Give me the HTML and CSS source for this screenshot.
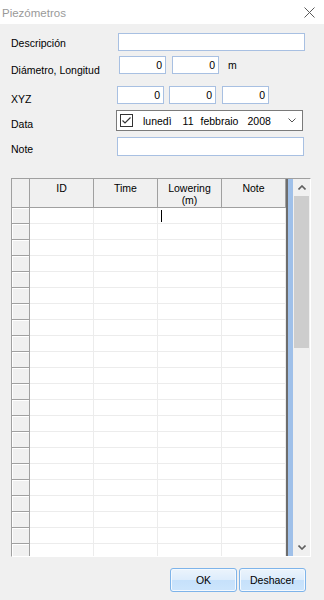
FILE: index.html
```html
<!DOCTYPE html>
<html lang="es">

<head>
  <meta charset="UTF-8" />
  <title>Piezómetros</title>
  <link rel="stylesheet" href="styles.css">
</head>

<body>
  <div class="window">
    <div class="titlebar">
      <span class="title">Piezómetros</span>
      <svg class="close" width="11" height="11" viewBox="0 0 11 11">
        <path d="M0.5 0.5 L10.5 10.5 M10.5 0.5 L0.5 10.5" stroke="#5a5a5a" stroke-width="1" fill="none" />
      </svg>
    </div>

    <div class="form">
      <div class="row row-desc">
        <label>Descripción</label>
        <div class="field wide shift1"></div>
      </div>
      <div class="row row-diam">
        <label>Diámetro, Longitud</label>
        <div class="field num shift2">0</div>
        <div class="field num gap6">0</div>
        <span class="unit">m</span>
      </div>
      <div class="row row-xyz">
        <label>XYZ</label>
        <div class="field num">0</div>
        <div class="field num gap5">0</div>
        <div class="field num gap6">0</div>
      </div>
      <div class="row row-data">
        <label>Data</label>
        <div class="datepicker">
          <svg class="check" width="13" height="13" viewBox="0 0 13 13">
            <rect x="0.5" y="0.5" width="12" height="12" fill="#fff" stroke="#333" />
            <path d="M2.5 6.5 L5 9 L10.5 3.5" stroke="#333" stroke-width="1.2" fill="none" />
          </svg>
          <span class="d-day">lunedì</span>
          <span class="d-num">11</span>
          <span class="d-month">febbraio</span>
          <span class="d-year">2008</span>
          <svg class="chev" width="8" height="5" viewBox="0 0 8 5">
            <path d="M0.5 0.5 L4 4 L7.5 0.5" stroke="#555" stroke-width="1" fill="none" />
          </svg>
        </div>
      </div>
      <div class="row row-note">
        <label>Note</label>
        <div class="field wide note"></div>
      </div>
    </div>

    <div class="grid">
      <div class="table" id="table">
        <div class="corner"></div>
        <div class="head">ID</div>
        <div class="head">Time</div>
        <div class="head">Lowering<br>(m)</div>
        <div class="head">Note</div>
      </div>
      <div class="edge"></div>
      <div class="scrollbar">
        <div class="arrow up">
          <svg width="8" height="5" viewBox="0 0 8 5"><path d="M0.5 4.5 L4 1 L7.5 4.5" stroke="#606060" stroke-width="1.6" fill="none" /></svg>
        </div>
        <div class="thumb"></div>
        <div class="track"></div>
        <div class="arrow down">
          <svg width="8" height="5" viewBox="0 0 8 5"><path d="M0.5 0.5 L4 4 L7.5 0.5" stroke="#606060" stroke-width="1.6" fill="none" /></svg>
        </div>
      </div>
    </div>

    <div class="buttons">
      <button class="btn">OK</button>
      <button class="btn">Deshacer</button>
    </div>
  </div>

  <script>
    const table = document.getElementById("table");
    for (let i = 0; i < 22; i++) {
      let html = '<div class="rowhead"></div>';
      for (let c = 0; c < 4; c++) {
        if (i === 0 && c === 2) {
          html += '<div class="cell"><span class="caret"></span></div>';
        } else {
          html += '<div class="cell"></div>';
        }
      }
      table.insertAdjacentHTML("beforeend", html);
    }
  </script>
</body>

</html>
```

FILE: styles.css
```css
* {
  box-sizing: border-box;
}

body {
  margin: 0;
  background: #f0f0f0;
  font-family: 'Liberation Sans', Arial, sans-serif;
  font-size: 10.5px;
  color: #000;
}

.window {
  width: 324px;
  height: 600px;
  overflow: hidden;
}

.titlebar {
  height: 24px;
  background: #fff;
  display: flex;
  align-items: center;
  justify-content: space-between;
  padding: 0 9px 0 2px;
}

.title {
  color: #999;
  font-size: 11.5px;
  margin-top: 1px;
}

/* form rows */
.form {
  padding-left: 11px;
}

.row {
  display: flex;
  align-items: flex-start;
  height: 18px;
}

.row label {
  width: 106px;
  line-height: 12px;
}

.row-desc {
  margin-top: 9px;
}

.row-desc label {
  margin-top: 4px;
}

.row-diam {
  margin-top: 5px;
}

.row-diam label {
  margin-top: 8px;
}

.row-xyz {
  margin-top: 12px;
}

.row-xyz label {
  margin-top: 7px;
}

.row-data {
  margin-top: 6px;
  height: 21px;
}

.row-data label {
  margin-top: 8px;
}

.row-note {
  margin-top: 6px;
  height: 19px;
}

.row-note label {
  margin-top: 6px;
}

.field {
  height: 18px;
  background: #fff;
  border: 1px solid #a8c0e2;
}

.wide {
  width: 187px;
}

.note {
  height: 19px;
}

.shift1 {
  margin-left: 1px;
}

.shift2 {
  margin-left: 2px;
}

.num {
  width: 47px;
  text-align: right;
  padding-right: 3px;
  line-height: 16px;
}

.gap5 {
  margin-left: 5px;
}

.gap6 {
  margin-left: 6px;
}

.unit {
  margin-left: 9px;
  line-height: 18px;
}

.datepicker {
  width: 187px;
  height: 21px;
  margin-left: -1px;
  background: #fff;
  border: 1px solid #7a7a7a;
  display: flex;
  align-items: center;
  white-space: nowrap;
}

.check {
  margin-left: 3px;
}

.d-day {
  margin-left: 10px;
}

.d-num {
  margin-left: 11px;
}

.d-month {
  margin-left: 7px;
}

.d-year {
  margin-left: 9px;
}

.chev {
  margin-left: auto;
  margin-right: 6px;
}

/* data grid */
.grid {
  margin: 22px 0 0 11px;
  width: 300px;
  height: 379px;
  display: flex;
  border-top: 1px solid #a0a0a0;
  border-left: 1px solid #a0a0a0;
  border-right: 1px solid #fff;
  border-bottom: 1px solid #fff;
}

.table {
  width: 276px;
  height: 377px;
  overflow: hidden;
  display: grid;
  grid-template-columns: 18px 64px 64px 64px 64px;
  grid-auto-rows: 16px;
  grid-template-rows: 29px;
  align-content: start;
  background: #fff;
  border-right: 2px solid #6d6d6d;
}

.corner,
.head {
  background: #f0f0f0;
  border-right: 1px solid #a0a0a0;
  border-bottom: 1px solid #a0a0a0;
}

.head {
  text-align: center;
  line-height: 12px;
  padding-top: 3px;
}

.rowhead {
  background: #f0f0f0;
  border-right: 1px solid #a0a0a0;
  border-bottom: 1px solid #a0a0a0;
  box-shadow: inset 1px 1px 0 #fff;
}

.cell {
  border-right: 1px solid #ececec;
  border-bottom: 1px solid #ececec;
}

.caret {
  display: block;
  width: 1px;
  height: 12px;
  margin: 2px 0 0 3px;
  background: #000;
}

.edge {
  width: 5px;
  background: #9fc0e9;
}

.scrollbar {
  width: 17px;
  display: flex;
  flex-direction: column;
  background: #f0f0f0;
}

.arrow {
  height: 17px;
  display: flex;
  align-items: center;
  justify-content: center;
}

.thumb {
  height: 152px;
  margin: 0 1px;
  background: #cdcdcd;
}

.track {
  flex: 1;
}

.buttons {
  display: flex;
  justify-content: flex-end;
  gap: 2px;
  margin-top: 11px;
  padding-right: 18px;
}

.btn {
  width: 67px;
  height: 24px;
  padding: 0;
  font-family: 'Liberation Sans', Arial, sans-serif;
  font-size: 10.5px;
  color: #000;
  border: 1px solid #7eb4ea;
  border-radius: 3px;
  background: linear-gradient(#ecf4fc 0%, #dcecfc 50%, #c6e1fb 52%, #cde5fc 100%);
  box-shadow: inset 0 0 0 1px #f4f9fe;
}
```
